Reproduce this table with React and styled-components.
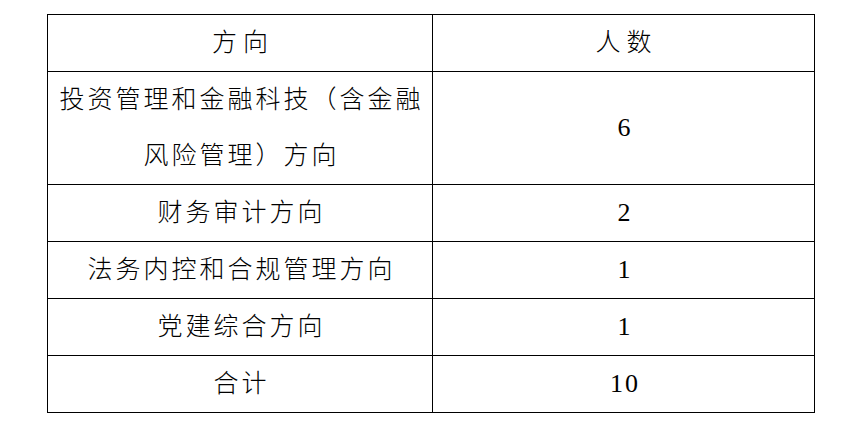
import React from "react";
import styled, { createGlobalStyle } from "styled-components";

const rows = [
    { name: ["投资管理和金融科技（含金融", "风险管理）方向"], count: "6", tall: true },
    { name: ["财务审计方向"], count: "2" },
    { name: ["法务内控和合规管理方向"], count: "1" },
    { name: ["党建综合方向"], count: "1" },
    { name: ["合计"], count: "10" },
];

export default function App() {
    return (
        <>
            <GlobalStyle />
            <Page>
                <Table>
                    <Cell $head>
                        <Line>方向</Line>
                    </Cell>
                    <Cell $head>
                        <Line>人数</Line>
                    </Cell>
                    {rows.map((row) => (
                        <React.Fragment key={row.name.join("")}>
                            <Cell $tall={row.tall}>
                                {row.name.map((line) => (
                                    <Line key={line}>{line}</Line>
                                ))}
                            </Cell>
                            <Cell $tall={row.tall}>
                                <Num>{row.count}</Num>
                            </Cell>
                        </React.Fragment>
                    ))}
                </Table>
            </Page>
        </>
    );
}

const GlobalStyle = createGlobalStyle`
  html, body {
    margin: 0;
    background: #ffffff;
  }
`;

const Page = styled.div`
  width: 856px;
  height: 430px;
  padding: 14px 0 0 47px;
  box-sizing: border-box;
`;

const Table = styled.div`
  display: grid;
  grid-template-columns: 385px 382px;
  border-top: 1px solid #000;
  border-left: 1px solid #000;
  width: max-content;
  font-family: "Noto Sans CJK SC", sans-serif;
  font-weight: 300;
  color: #000;
`;

const Cell = styled.div`
  box-sizing: border-box;
  height: ${(p) => (p.$tall ? "113px" : "57px")};
  border-right: 1px solid #000;
  border-bottom: 1px solid #000;
  display: flex;
  flex-direction: column;
  align-items: center;
  justify-content: center;
  font-size: 25px;
  letter-spacing: ${(p) => (p.$head ? "6px" : "3px")};
  padding-left: ${(p) => (p.$head ? "6px" : "3px")};
  white-space: nowrap;
`;

const Line = styled.span`
  display: block;
  line-height: 56px;
  margin-top: -3px;
  margin-bottom: 3px;
`;

const Num = styled.span`
  font-family: "Liberation Serif", serif;
  font-size: 26px;
  line-height: 56px;
  letter-spacing: 2px;
`;
